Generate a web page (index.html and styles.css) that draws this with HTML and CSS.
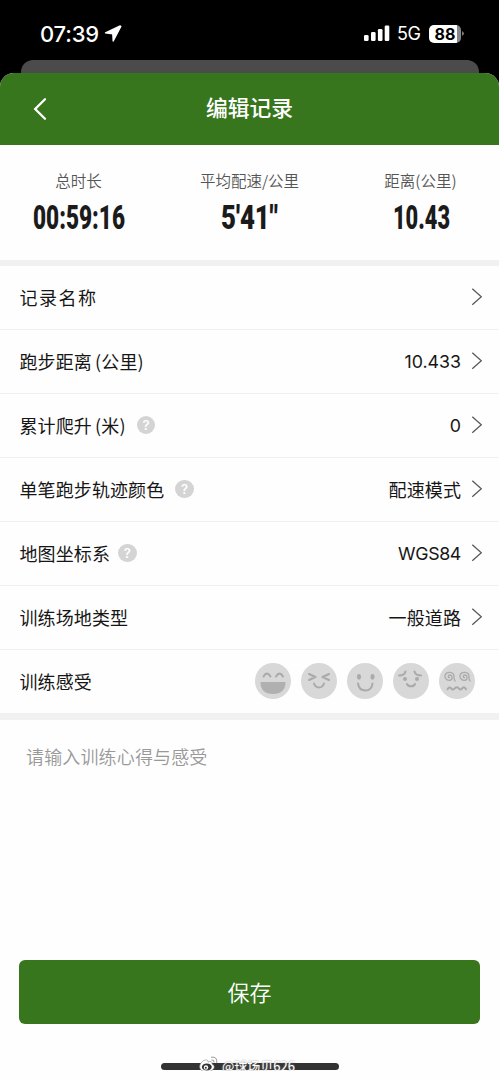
FILE: index.html
```
<!DOCTYPE html>
<html lang="zh-CN">
<head>
<meta charset="utf-8">
<title>编辑记录</title>
<link rel="stylesheet" href="styles.css">
</head>
<body>
<svg width="0" height="0" class="defs" aria-hidden="true">
  <symbol id="chev" viewBox="0 0 12 18"><path d="M1.3 .8L10.3 8.8L1.3 16.8" fill="none" stroke="#555" stroke-width="1.2"/></symbol>
</svg>
<div class="status">
  <span class="time">07:39</span>
  <svg class="loc" width="18" height="18" viewBox="0 0 18 18"><path d="M16.2 1L1.5 7.9L8.8 8.8L9.2 16L16.8 1.4Z" fill="#fff" stroke="#fff" stroke-width="1.4" stroke-linejoin="round"/></svg>
  <svg class="signal" width="26" height="17" viewBox="0 0 26 17" fill="#fff"><rect x="0" y="10" width="4.6" height="6" rx="1.3"/><rect x="7" y="7" width="4.6" height="9" rx="1.3"/><rect x="13.9" y="4" width="4.6" height="12" rx="1.3"/><rect x="20.7" y=".5" width="4.6" height="15.5" rx="1.3"/></svg>
  <span class="net">5G</span>
  <span class="battery">88</span>
  <svg class="cap" width="3" height="7" viewBox="0 0 3 7"><path d="M0 1Q4 3.5 0 6Z" fill="#777"/></svg>
</div>
<div class="behind"></div>
<main class="sheet">
  <header class="head">
    <svg class="back" width="16" height="24" viewBox="0 0 16 24"><path d="M13 2.2L3.2 12L13 21.8" fill="none" stroke="#fff" stroke-width="2.3" stroke-linecap="round"/></svg>
    <h1 class="title">编辑记录</h1>
  </header>
  <section class="stats">
    <div class="stat"><span class="cap-text">总时长</span><svg class="num" width="100" height="44"><text x="4" y="34" textLength="92" lengthAdjust="spacingAndGlyphs">00:59:16</text></svg></div>
    <div class="stat"><span class="cap-text">平均配速/公里</span><svg class="num" width="70" height="44"><text x="6" y="34" textLength="57" lengthAdjust="spacingAndGlyphs">5'41"</text></svg></div>
    <div class="stat"><span class="cap-text">距离(公里)</span><svg class="num" width="70" height="44"><text x="7" y="34" textLength="57" lengthAdjust="spacingAndGlyphs">10.43</text></svg></div>
  </section>
  <section class="list">
    <div class="row"><span class="label wide">记录名称</span><span class="value"></span><svg class="chev"><use href="#chev"/></svg></div>
    <div class="row"><span class="label">跑步距离<i class="paren">(公里)</i></span><span class="value latin">10.433</span><svg class="chev"><use href="#chev"/></svg></div>
    <div class="row"><span class="label">累计爬升<i class="paren">(米)</i></span><span class="help gap-l">?</span><span class="value latin">0</span><svg class="chev"><use href="#chev"/></svg></div>
    <div class="row"><span class="label">单笔跑步轨迹颜色</span><span class="help gap-l">?</span><span class="value cjk">配速模式</span><svg class="chev"><use href="#chev"/></svg></div>
    <div class="row"><span class="label">地图坐标系</span><span class="help">?</span><span class="value latin tight">WGS84</span><svg class="chev"><use href="#chev"/></svg></div>
    <div class="row"><span class="label">训练场地类型</span><span class="value cjk">一般道路</span><svg class="chev"><use href="#chev"/></svg></div>
    <div class="row last"><span class="label">训练感受</span>
      <div class="faces">
        <svg class="face" viewBox="0 0 36 36"><circle cx="18" cy="18" r="18"/><path d="M5.5 19H30.5Q30.5 31 18 31Q5.5 31 5.5 19Z" fill="#b0b0b0"/><path d="M8.5 13.5Q12 7.5 15.5 13.5M21 13.5Q24.5 7.5 28 13.5" class="ln"/></svg>
        <svg class="face" viewBox="0 0 36 36"><circle cx="18" cy="18" r="18"/><path d="M8 11L14.5 14L8 17M28 11L21.5 14L28 17M13 20.5Q14.5 24.5 18 24.5Q21.5 24.5 23 20.5" class="ln"/></svg>
        <svg class="face" viewBox="0 0 36 36"><circle cx="18" cy="18" r="18"/><ellipse cx="12" cy="13.8" rx="2" ry="2.8" fill="#aaa"/><ellipse cx="25.5" cy="13.8" rx="2" ry="2.8" fill="#aaa"/><path d="M11 20.5Q12 27.5 18.3 27.5Q24.8 27.5 25.5 20.5" class="ln"/></svg>
        <svg class="face" viewBox="0 0 36 36"><circle cx="18" cy="18" r="18"/><circle cx="12" cy="16" r="2" fill="#aaa"/><circle cx="24" cy="16" r="2" fill="#aaa"/><path d="M6 12.5Q11.5 12.5 12.5 8.5M21.5 8.5Q22.5 12.5 28 12.5M14 21Q15 23.3 18 23.3Q21 23.3 22 21" class="ln"/></svg>
        <svg class="face" viewBox="0 0 36 36"><circle cx="18" cy="18" r="18"/><path id="swirl" d="M10.6 14.6C9 14.9 8.5 12.4 10.6 12C13.8 11.8 14 17 10.6 17.3C6.6 17.6 5.4 13.8 6.1 12C7.5 8.2 14.8 8.4 15 13.2C15 15.5 14.7 17 16.2 18" class="ln thin"/><use href="#swirl" x="15"/><path d="M8.5 26.3Q10.3 23 12.2 25.4Q14 27.8 16 25.2Q18 23 19.8 25.4Q21.5 27.8 23.4 25.2Q25.4 23 27 26.3" class="ln"/></svg>
      </div>
    </div>
  </section>
  <section class="notes">请输入训练心得与感受</section>
  <button class="save">保存</button>
  <footer class="home"><div class="bar"></div>
    <div class="mark"><svg width="19" height="17" viewBox="0 0 19 17"><path d="M6.5 4C3 4.5.5 8.5.7 11.2C1.2 14.5 4 15.8 8 15.7C12.5 15.5 15.5 13.2 15.2 10.5C15 8.8 13.3 8.6 13 8C13.5 5.5 12 5 9 6C9.3 4.5 8.3 3.6 6.5 4Z" fill="#fff" stroke="#888" stroke-width=".6"/><ellipse cx="7.8" cy="11" rx="5" ry="3.5" fill="#333"/><circle cx="7" cy="11.5" r="2.2" fill="#fff"/><circle cx="6.8" cy="11.7" r="1" fill="#333"/><path d="M12 1.2Q18.5.2 17.8 7M12.5 4Q15.5 3.5 15 6.5" fill="none" stroke="#999" stroke-width="1"/></svg><span class="mark-text">@球场贝626</span></div>
  </footer>
</main>
</body>
</html>
```

FILE: styles.css
```
* { box-sizing: border-box; }
body {
  margin: 0;
  width: 499px;
  height: 1080px;
  overflow: hidden;
  display: flex;
  flex-direction: column;
  background: #000;
  color: #161616;
  font-family: Inter, "Noto Sans CJK SC", sans-serif;
}
.defs { position: absolute; }
.status {
  height: 60px;
  padding: 7px 34px 0 40px;
  display: flex;
  align-items: center;
  color: #fff;
}
.time { width: 60px; font-size: 22px; font-weight: 500; letter-spacing: -.2px; }
.loc { margin-left: 4px; }
.signal { margin-left: auto; }
.net { margin-left: 7px; width: 25px; font-size: 18px; letter-spacing: -.5px; }
.battery {
  margin-left: 7px;
  width: 32px;
  height: 18px;
  border-radius: 5px;
  background: linear-gradient(to right, #fff 28.5px, #888 28.5px);
  color: #000;
  font-size: 16px;
  font-weight: 700;
  line-height: 18px;
  text-align: center;
}
.cap { margin-left: 1px; }
.behind {
  height: 13px;
  margin: 0 20px 0 21px;
  border-radius: 12px 12px 0 0;
  background: #4b4b4b;
}
.sheet {
  flex: 1;
  display: flex;
  flex-direction: column;
  border-radius: 14px 14px 0 0;
  overflow: hidden;
  background: #fefefe;
}
.head {
  height: 71.5px;
  flex: none;
  display: grid;
  grid-template-columns: 60px 1fr 60px;
  align-items: center;
  background: #37761d;
  color: #fff;
}
.back { margin-left: 32px; }
.title { margin: 0; padding-bottom: 1px; font-size: 21.8px; font-weight: 500; line-height: 32px; text-align: center; }
.stats {
  height: 121.5px;
  flex: none;
  padding: 23px 0 0;
  display: grid;
  grid-template-columns: 157px 185px 157px;
  border-bottom: 6px solid #f1f1f1;
}
.stat { display: flex; flex-direction: column; align-items: center; }
.cap-text { font-size: 15.5px; line-height: 24px; font-weight: 350; font-family: "Noto Sans CJK SC", sans-serif; color: #555; }
.num { margin-top: 3px; font: 900 33px Roboto, sans-serif; fill: #1b1b1b; }
.list { flex: none; border-bottom: 7px solid #f1f1f1; }
.row {
  height: 64px;
  padding: 0 16px 0 19.5px;
  display: flex;
  align-items: center;
  border-bottom: 1px solid #f0f0f0;
  font-size: 18px;
}
.row.last { height: 63px; border: 0; padding-right: 24.5px; }
.label { padding-bottom: 2px; letter-spacing: .1px; font-family: "Noto Sans CJK SC", sans-serif; }
.wide { letter-spacing: 1.5px; }
.paren { font-style: normal; margin-left: 3px; letter-spacing: .2px; }
.help {
  width: 18.5px;
  height: 18.5px;
  margin: 0 0 1px 8px;
  border-radius: 50%;
  background: #d4d4d4;
  color: #fff;
  font-size: 13px;
  font-weight: 600;
  line-height: 18.5px;
  text-align: center;
}
.gap-l { margin-left: 11px; }
.value { margin-left: auto; letter-spacing: .1px; }
.cjk { padding-bottom: 2px; }
.latin { font-size: 17.8px; letter-spacing: 0; }
.tight { letter-spacing: -.35px; }
.chev { width: 12px; height: 18px; margin: 0 0 1px 10px; }
.faces { margin-left: auto; padding-bottom: 1px; display: flex; gap: 10px; }
.face { width: 36px; height: 36px; fill: #d8d8d8; }
.ln { fill: none; stroke: #aaa; stroke-width: 2; stroke-linecap: round; stroke-linejoin: round; }
.thin { stroke-width: 1.3; }
.notes { flex: 1; padding: 24px 26px; font-size: 18px; line-height: 27px; letter-spacing: .15px; font-weight: 350; color: #999; }
.save {
  height: 64px;
  flex: none;
  margin: 0 19px;
  padding: 0 0 2px;
  border: 0;
  border-radius: 6px;
  background: #37761d;
  color: #fff;
  font: 350 22px/62px "Noto Sans CJK SC", sans-serif;
}
.home { height: 56px; flex: none; padding-top: 39px; position: relative; }
.bar { width: 178px; height: 7px; margin: 0 auto; border-radius: 4px; background: #333; }
.mark { position: absolute; left: 199px; top: 32px; height: 15px; overflow: hidden; display: flex; }
.mark-text { margin-left: 4px; font: 13px/19px "Noto Sans CJK SC", sans-serif; color: #fff; text-shadow: 0 0 2px #888; white-space: nowrap; }
```
